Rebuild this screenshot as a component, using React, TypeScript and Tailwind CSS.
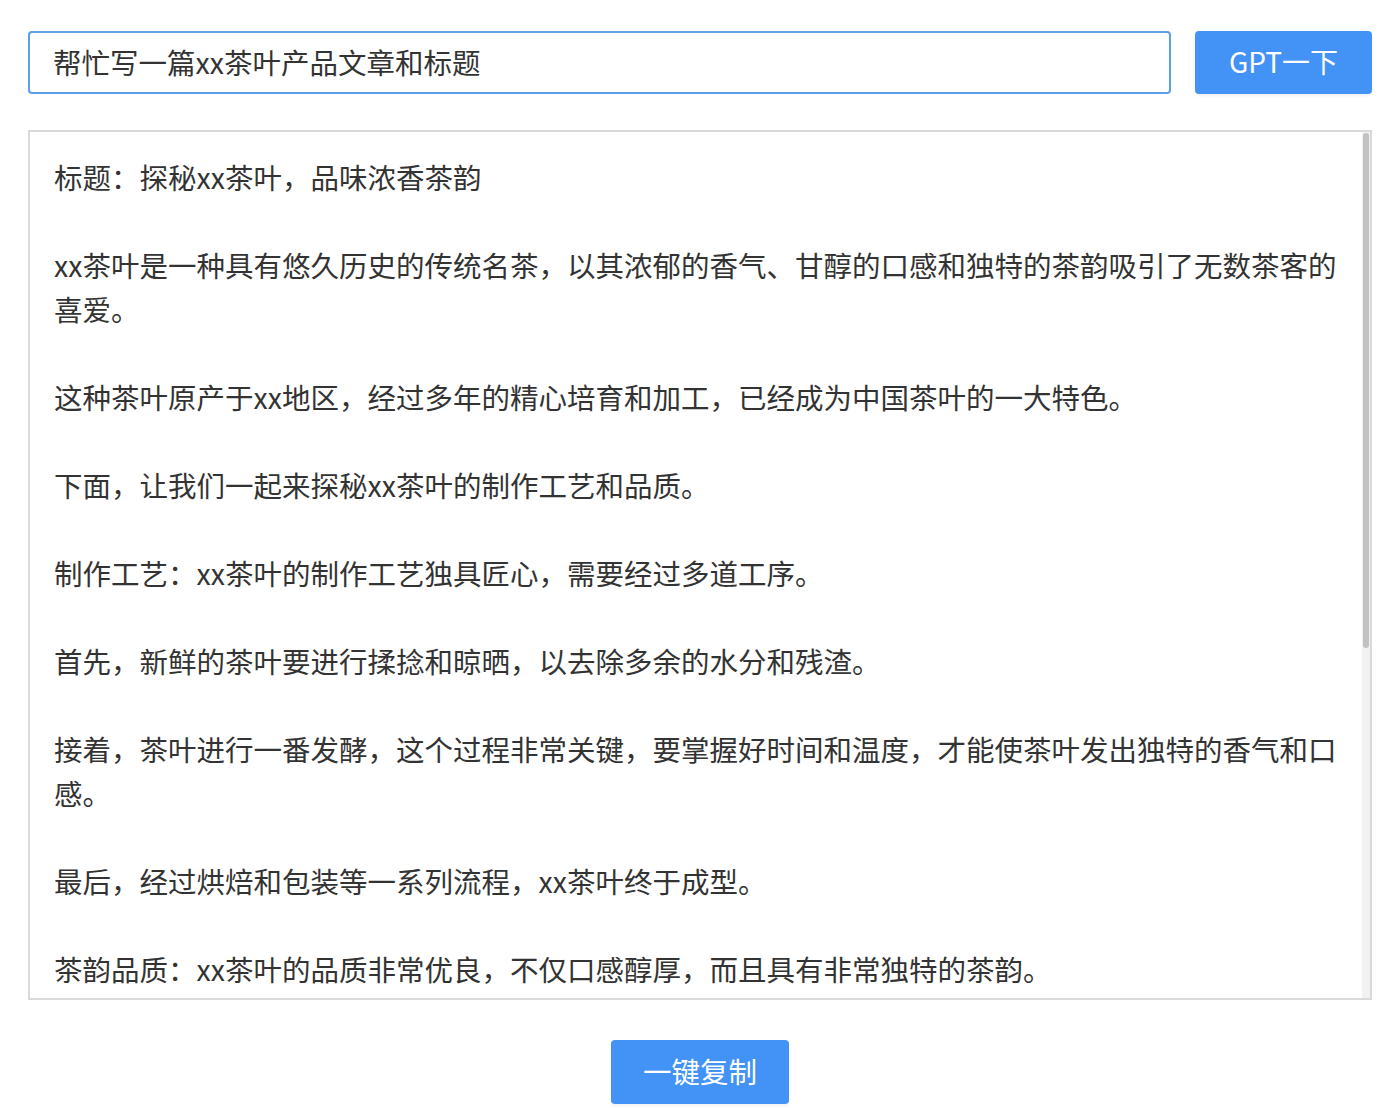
import {useState} from "react";

const article: string[] = [
    '标题：探秘xx茶叶，品味浓香茶韵',
    'xx茶叶是一种具有悠久历史的传统名茶，以其浓郁的香气、甘醇的口感和独特的茶韵吸引了无数茶客的喜爱。',
    '这种茶叶原产于xx地区，经过多年的精心培育和加工，已经成为中国茶叶的一大特色。',
    '下面，让我们一起来探秘xx茶叶的制作工艺和品质。',
    '制作工艺：xx茶叶的制作工艺独具匠心，需要经过多道工序。',
    '首先，新鲜的茶叶要进行揉捻和晾晒，以去除多余的水分和残渣。',
    '接着，茶叶进行一番发酵，这个过程非常关键，要掌握好时间和温度，才能使茶叶发出独特的香气和口感。',
    '最后，经过烘焙和包装等一系列流程，xx茶叶终于成型。',
    '茶韵品质：xx茶叶的品质非常优良，不仅口感醇厚，而且具有非常独特的茶韵。',
];

function App() {
    const [prompt, setPrompt] = useState<string>('帮忙写一篇xx茶叶产品文章和标题');

    return (
        <div className="min-h-screen bg-white pl-[28px] pr-[20px] pt-[31px] text-[28.5px] text-[#333333]"
             style={{fontFamily: '"PingFang SC", "Noto Sans CJK SC", "Noto Sans", sans-serif'}}>
            <div className="flex items-center gap-[24px]">
                <input type="text"
                       className="h-[63px] flex-1 rounded-[4px] border-2 border-[#5c9fe8] bg-white px-[23px] pb-[3px] text-[28.5px] text-[#333333] outline-none"
                       value={prompt} onChange={event => setPrompt(event.target.value)}/>
                <button
                    className="h-[63px] w-[177px] rounded-[4px] bg-[#4293f5] pb-[3px] text-[28px] text-white shadow-[0_2px_3px_rgba(0,0,0,0.06)]">
                    GPT一下
                </button>
            </div>

            <div className="relative mt-[36px] h-[870px] overflow-hidden border-2 border-[#d9d9d9] bg-white">
                <div className="pl-[24px] pr-[18px] pt-[23px] leading-[44px]">
                    {article.map((paragraph, index) => (
                        <p key={index} className="mb-[44px] last:mb-0">{paragraph}</p>
                    ))}
                </div>
                {/* scrollbar */}
                <div className="absolute right-0 top-0 bottom-0 w-[8px] bg-[#f1f1f1]">
                    <div className="mx-auto mt-[1px] h-[515px] w-[6px] rounded-[3px] bg-[#c1c1c1]"></div>
                </div>
            </div>

            <div className="flex justify-center pt-[40px] pb-[16px]">
                <button
                    className="h-[64px] w-[178px] rounded-[4px] bg-[#4293f5] pb-[2px] text-[28.5px] text-white shadow-[0_2px_3px_rgba(0,0,0,0.06)]">
                    一键复制
                </button>
            </div>
        </div>
    );
}

export default App;
